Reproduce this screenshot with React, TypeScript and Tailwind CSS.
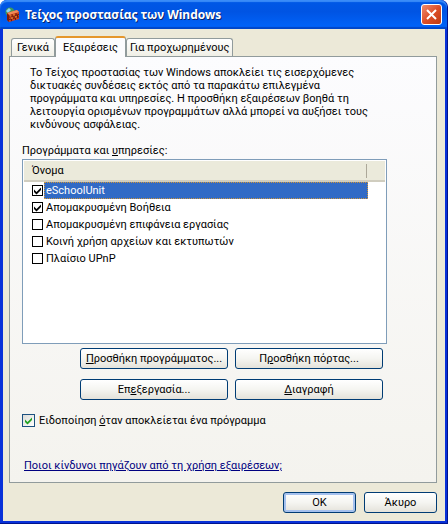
import { useState } from 'react';
import type { ReactNode } from 'react';

const initialPrograms = [
  { id: 'eschool', name: 'eSchoolUnit', checked: true },
  { id: 'remote-help', name: 'Απομακρυσμένη Βοήθεια', checked: true },
  { id: 'remote-desktop', name: 'Απομακρυσμένη επιφάνεια εργασίας', checked: false },
  { id: 'file-sharing', name: 'Κοινή χρήση αρχείων και εκτυπωτών', checked: false },
  { id: 'upnp', name: 'Πλαίσιο UPnP', checked: false },
];

function FirewallIcon() {
  return (
    <svg viewBox="0 0 16 16" className="size-4 shrink-0" aria-hidden="true">
      <circle cx="5" cy="5" r="4.5" fill="#3f9a5a" />
      <path d="M1 4 L4 1 L6 3 L3 6 Z" fill="#8fd0f0" />
      <path d="M2 6 L12 3 L14 5 L14 12 L4 15 L2 13 Z" fill="#d0401c" />
      <path d="M2 6 L12 3 L14 5 L4 8 Z" fill="#f08a58" />
      <path d="M2 6 L4 8 V15 L2 13 Z" fill="#7a1c0c" />
      <path d="M4 10.2 L14 7.4 M4 12.6 L14 9.8 M7 7.2 V9.4 M11 6 V8.2 M9 9 V11.2 M12.5 8 V10.2 M6.5 12 V14.2 M10.5 11 V13" stroke="#5a1408" strokeWidth="0.8" />
      <path d="M5 9 H6.5 M8 8 H10 M6 11.2 H8 M10 10 H12" stroke="#ffb040" strokeWidth="0.8" />
    </svg>
  );
}

function PushButton({ children, className = '', primary = false }: { children: ReactNode; className?: string; primary?: boolean }) {
  return (
    <button
      type="button"
      className={`h-[21px] rounded-[3px] border border-[#003c74] bg-linear-to-b from-white via-[#f5f5f1] to-[#e4e2da] text-center leading-[19px] whitespace-nowrap ${
        primary ? 'shadow-[inset_0_0_0_2px_#a5c1ee]' : ''
      } ${className}`}
    >
      {children}
    </button>
  );
}

export default function App() {
  const [programs, setPrograms] = useState(initialPrograms);
  const [notify, setNotify] = useState(true);

  const toggle = (id: string) =>
    setPrograms(programs.map((p) => (p.id === id ? { ...p, checked: !p.checked } : p)));

  return (
    <main className="flex min-h-screen flex-col rounded-t-[7px] border-r border-b border-[#00138c] bg-[#0831d9] font-[Roboto,'Liberation_Sans',sans-serif] text-[11px] leading-[13px] text-black">
      {/* Title bar */}
      <header className="flex h-[29px] items-center gap-1 rounded-t-[7px] bg-linear-to-b from-[#0058e6] from-0% via-[#0054e3] via-40% to-[#0062f8] to-90% px-[5px] shadow-[inset_0_2px_1px_#3a8cf8,inset_0_-2px_1px_#0046c8]">
        <FirewallIcon />
        <h1 className="flex-1 font-['Noto_Sans',sans-serif] text-[12px] leading-4 font-bold text-white [text-shadow:1px_1px_#0a246a]">
          Τείχος προστασίας των Windows
        </h1>
        <button
          type="button"
          aria-label="Κλείσιμο"
          className="flex size-[21px] items-center justify-center rounded-[3px] border border-white bg-linear-to-br from-[#ee8a6c] via-[#dd4f28] to-[#c03a10]"
        >
          <svg viewBox="0 0 11 11" className="size-[11px]" aria-hidden="true">
            <path d="M1 1 L10 10 M10 1 L1 10" stroke="#fff" strokeWidth="2" />
          </svg>
        </button>
      </header>

      {/* Window body */}
      <div className="mr-[2px] mb-[2px] ml-[3px] flex flex-1 flex-col bg-[#ece9d8] pt-[7px] pr-2 pl-[6px]">
        <nav role="tablist" className="flex items-end px-[2px]">
          <button type="button" role="tab" aria-selected="false" className="h-[18px] rounded-t-[3px] border border-b-0 border-[#919b9c] bg-linear-to-b from-white to-[#f0efe6] px-[5px]">
            Γενικά
          </button>
          <button type="button" role="tab" aria-selected="true" className="relative -mb-px h-[21px] rounded-t-[3px] border border-t-2 border-b-0 border-[#919b9c] border-t-[#e5972d] bg-[#fcfcfe] px-[7px]">
            Εξαιρέσεις
          </button>
          <button type="button" role="tab" aria-selected="false" className="h-[18px] rounded-t-[3px] border border-b-0 border-[#919b9c] bg-linear-to-b from-white to-[#f0efe6] px-[3px]">
            Για προχωρημένους
          </button>
        </nav>

        <section role="tabpanel" className="flex flex-1 flex-col border border-[#919b9c] bg-linear-to-b from-[#fcfcfe] to-[#f4f3ee] px-3 pt-[9px]">
          <p className="pl-2">
            Το Τείχος προστασίας των Windows αποκλείει τις εισερχόμενες
            <br />
            δικτυακές συνδέσεις εκτός από τα παρακάτω επιλεγμένα
            <br />
            προγράμματα και υπηρεσίες. Η προσθήκη εξαιρέσεων βοηθά τη
            <br />
            λειτουργία ορισμένων προγραμμάτων αλλά μπορεί να αυξήσει τους
            <br />
            κινδύνους ασφάλειας.
          </p>

          <h2 className="mt-[13px]">
            Προγράμματα και <u>υ</u>πηρεσίες:
          </h2>

          {/* Program list */}
          <div className="mt-[2px] mr-[37px] h-[185px] border border-[#7f9db9] bg-white p-px">
            <div className="flex h-[21px] items-center border-b-2 border-[#d0cdbf] bg-[#ebeadb]">
              <span className="flex-1 pl-2">Όνομα</span>
              <span className="mr-[18px] h-[14px] border-l border-[#aca899]" />
            </div>
            <ul className="pr-[17px] pl-2">
              {programs.map((program, i) => (
                <li key={program.id}>
                  <label className="flex h-[17px] items-center">
                    <input
                      type="checkbox"
                      checked={program.checked}
                      onChange={() => toggle(program.id)}
                      className="sr-only"
                    />
                    <span className="flex size-[11px] shrink-0 items-center justify-center border border-black bg-white">
                      {program.checked && (
                        <svg viewBox="0 0 9 9" className="size-[9px]" aria-hidden="true">
                          <path d="M1 3.5 L3.5 6 L8 1.5 V4 L3.5 8.5 L1 6 Z" fill="#000" />
                        </svg>
                      )}
                    </span>
                    <span className={`ml-px flex h-[17px] flex-1 items-center pl-[2px] ${i === 0 ? 'bg-[#316ac5] text-white outline-1 -outline-offset-1 outline-dotted outline-[#ce953a]' : ''}`}>
                      {program.name}
                    </span>
                  </label>
                </li>
              ))}
            </ul>
          </div>

          <div className="mt-1 mr-[41px] ml-[58px] grid grid-cols-2 gap-x-[7px] gap-y-[10px]">
            <PushButton>
              <u>Π</u>ροσθήκη προγράμματος...
            </PushButton>
            <PushButton>
              Π<u>ρ</u>οσθήκη πόρτας...
            </PushButton>
            <PushButton>
              Επ<u>ε</u>ξεργασία...
            </PushButton>
            <PushButton>
              <u>Δ</u>ιαγραφή
            </PushButton>
          </div>

          <label className="mt-[14px] flex items-center gap-1">
            <input type="checkbox" checked={notify} onChange={() => setNotify(!notify)} className="sr-only" />
            <span className="flex size-[13px] items-center justify-center border border-[#1c5180] bg-linear-to-br from-[#dcdcd7] to-white">
              {notify && (
                <svg viewBox="0 0 9 9" className="size-[9px]" aria-hidden="true">
                  <path d="M1 3.5 L3.5 6 L8 1.5 V4 L3.5 8.5 L1 6 Z" fill="#21a121" />
                </svg>
              )}
            </span>
            <span>
              Ειδοποίηση <u>ό</u>ταν αποκλείεται ένα πρόγραμμα
            </span>
          </label>

          <a href="#risks" className="mt-[32px] ml-[2px] self-start text-[#000080] underline">
            Ποιοι κίνδυνοι πηγάζουν από τη χρήση εξαιρέσεων;
          </a>
        </section>

        <footer className="flex justify-end gap-2 pt-[9px] pb-2">
          <PushButton primary className="w-[73px]">OK</PushButton>
          <PushButton className="w-[73px]">Άκυρο</PushButton>
        </footer>
      </div>
    </main>
  );
}
